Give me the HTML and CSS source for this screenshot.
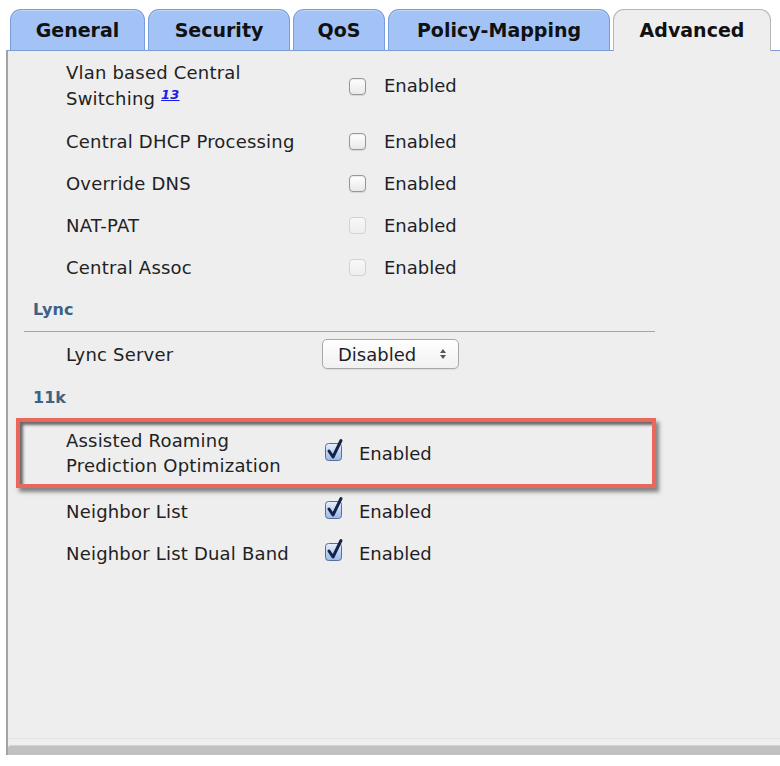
FILE: index.html
```html
<!DOCTYPE html>
<html>
<head>
<meta charset="utf-8">
<link rel="stylesheet" href="styles.css">
</head>
<body>
<div class="tabs">
  <div class="tab w-general">General</div>
  <div class="tab w-security">Security</div>
  <div class="tab w-qos">QoS</div>
  <div class="tab w-policy">Policy-Mapping</div>
  <div class="tab active w-adv">Advanced</div>
</div>
<div class="panel">
  <div class="content">
    <div class="group g1">
      <div class="row two">
        <div class="label">Vlan based Central<br>Switching <a class="ref">13</a></div>
        <span class="cb"></span><span class="val">Enabled</span>
      </div>
      <div class="row">
        <div class="label">Central DHCP Processing</div>
        <span class="cb"></span><span class="val">Enabled</span>
      </div>
      <div class="row">
        <div class="label">Override DNS</div>
        <span class="cb"></span><span class="val">Enabled</span>
      </div>
      <div class="row">
        <div class="label">NAT-PAT</div>
        <span class="cb disabled"></span><span class="val">Enabled</span>
      </div>
      <div class="row">
        <div class="label">Central Assoc</div>
        <span class="cb disabled"></span><span class="val">Enabled</span>
      </div>
    </div>

    <div class="section lined">Lync</div>
    <div class="group g2">
      <div class="row sel-row">
        <div class="label">Lync Server</div>
        <div class="select">
          <span>Disabled</span>
          <svg class="arrows" width="8" height="12" viewBox="0 0 8 12"><path d="M4 1 L7 5 H1 Z M4 11 L7 7 H1 Z" fill="#555"/></svg>
        </div>
      </div>
    </div>

    <div class="section">11k</div>
    <div class="group g3">
      <div class="annot">
        <div class="row two">
          <div class="label">Assisted Roaming<br>Prediction Optimization</div>
          <span class="cbx"><svg width="22" height="24" viewBox="0 0 22 24"><defs><linearGradient id="g" x1="0" y1="0" x2="0" y2="1"><stop offset="0" stop-color="#e8f0fc"/><stop offset="1" stop-color="#98b9e8"/></linearGradient></defs><rect x="1.5" y="5.5" width="16" height="17" rx="3" fill="url(#g)" stroke="#5a6d9a"/><path d="M5 13 L9 19 L17 2.5" fill="none" stroke="#15234a" stroke-width="3" stroke-linecap="round" stroke-linejoin="round"/></svg></span><span class="val">Enabled</span>
        </div>
      </div>
      <div class="row">
        <div class="label">Neighbor List</div>
        <span class="cbx"><svg width="22" height="24" viewBox="0 0 22 24"><rect x="1.5" y="5.5" width="16" height="17" rx="3" fill="url(#g)" stroke="#5a6d9a"/><path d="M5 13 L9 19 L17 2.5" fill="none" stroke="#15234a" stroke-width="3" stroke-linecap="round" stroke-linejoin="round"/></svg></span><span class="val">Enabled</span>
      </div>
      <div class="row">
        <div class="label">Neighbor List Dual Band</div>
        <span class="cbx"><svg width="22" height="24" viewBox="0 0 22 24"><rect x="1.5" y="5.5" width="16" height="17" rx="3" fill="url(#g)" stroke="#5a6d9a"/><path d="M5 13 L9 19 L17 2.5" fill="none" stroke="#15234a" stroke-width="3" stroke-linecap="round" stroke-linejoin="round"/></svg></span><span class="val">Enabled</span>
      </div>
    </div>
  </div>
  <div class="footer"><div class="bar"></div></div>
</div>
</body>
</html>
```

FILE: styles.css
```css
html, body {
  margin: 0;
  padding: 0;
  background: #ffffff;
}
body {
  font-family: "DejaVu Sans", Verdana, sans-serif;
  font-size: 18px;
  color: #222;
  width: 780px;
  height: 766px;
  overflow: hidden;
}
.tabs {
  display: flex;
  align-items: flex-end;
  gap: 3px;
  padding: 9px 0 0 10px;
  height: 50px;
  box-sizing: border-box;
  position: relative;
  z-index: 2;
}
.tab {
  height: 41px;
  box-sizing: border-box;
  border: 1px solid #7b9dd6;
  border-bottom: none;
  border-radius: 11px 11px 0 0;
  background: #a3c3f6;
  box-shadow: inset 0 1px 0 rgba(255,255,255,0.35);
  font-weight: bold;
  font-size: 19px;
  color: #111;
  display: flex;
  align-items: center;
  justify-content: center;
  padding-bottom: 1px;
}
.tab.active {
  background: #eeeeee;
  border-color: #b5b5b5;
  box-shadow: none;
  height: 42px;
  margin-bottom: -1px;
}
.w-general { width: 135px; }
.w-security { width: 142px; }
.w-qos { width: 92px; }
.w-policy { width: 222px; }
.w-adv { width: 158px; }

.panel {
  margin-left: 6px;
  height: 705px;
  box-sizing: border-box;
  border-left: 2px solid #a3a3a3;
  border-top: 1px solid #7b9dd6;
  background: #eeeeee;
  display: flex;
  flex-direction: column;
}
.content {
  flex: 1;
  padding-top: 1px;
}
.row {
  display: flex;
  align-items: center;
  height: 42px;
  padding-left: 58px;
}
.row.two {
  height: 68px;
  line-height: 26px;
}
.g1 .label { width: 283px; }
.g2 .label { width: 256px; }
.g3 .label { width: 258px; }
.g1 .label, .g2 .label, .g3 .label { letter-spacing: 0.2px; }

.cb {
  width: 15px;
  height: 15px;
  border: 1px solid #979797;
  border-radius: 4px;
  background: linear-gradient(#ffffff, #e9e9e9);
  box-shadow: inset 0 1px 1px rgba(0,0,0,0.08), 0 1px 1px rgba(0,0,0,0.1);
  margin-right: 18px;
}
.cb.disabled {
  border-color: #d2d2d2;
  background: linear-gradient(#f8f8f8, #eeeeee);
  box-shadow: none;
}
.cbx {
  display: flex;
  width: 22px;
  height: 24px;
  margin-top: -6px;
  margin-right: 13px;
}
.val { color: #1e1e28; }

.ref {
  font-size: 13px;
  line-height: 0;
  font-weight: bold;
  font-style: italic;
  color: #1b1bea;
  text-decoration: underline;
  vertical-align: 6px;
}

.section {
  margin-left: 16px;
  margin-right: 125px;
  padding: 11px 0 10px 9px;
  line-height: 22px;
  font-size: 16px;
  font-weight: bold;
  color: #3c6284;
}
.section.lined {
  border-bottom: 1px solid #8ca9c0;
}
.sel-row { height: 44px; }
.select {
  width: 137px;
  height: 30px;
  box-sizing: border-box;
  border: 1px solid #a9a9a9;
  border-radius: 5px;
  background: linear-gradient(#ffffff, #f1f1f1);
  box-shadow: 0 1px 1px rgba(0,0,0,0.08);
  display: flex;
  align-items: center;
  justify-content: space-between;
  padding: 0 11px 0 15px;
  color: #1e1e28;
}

.annot {
  margin-left: 8px;
  margin-right: 124px;
  margin-top: -1px;
  margin-bottom: 2px;
  border: 4px solid #e9685b;
  box-shadow: inset 3px 3px 3px rgba(60,60,60,0.75), 3px 4px 4px rgba(40,40,40,0.55);
}
.annot .row {
  padding-left: 46px;
  height: 62px;
  line-height: 25px;
}
.annot .label { width: 258px; }

.footer {
  height: 16px;
  border-top: 1px solid #e2e2e2;
  display: flex;
  flex-direction: column;
  justify-content: flex-end;
}
.bar {
  height: 9px;
  background: #c1c1c1;
  border-top: 1px solid #d4d4d4;
  border-radius: 3px 0 0 0;
}
```
